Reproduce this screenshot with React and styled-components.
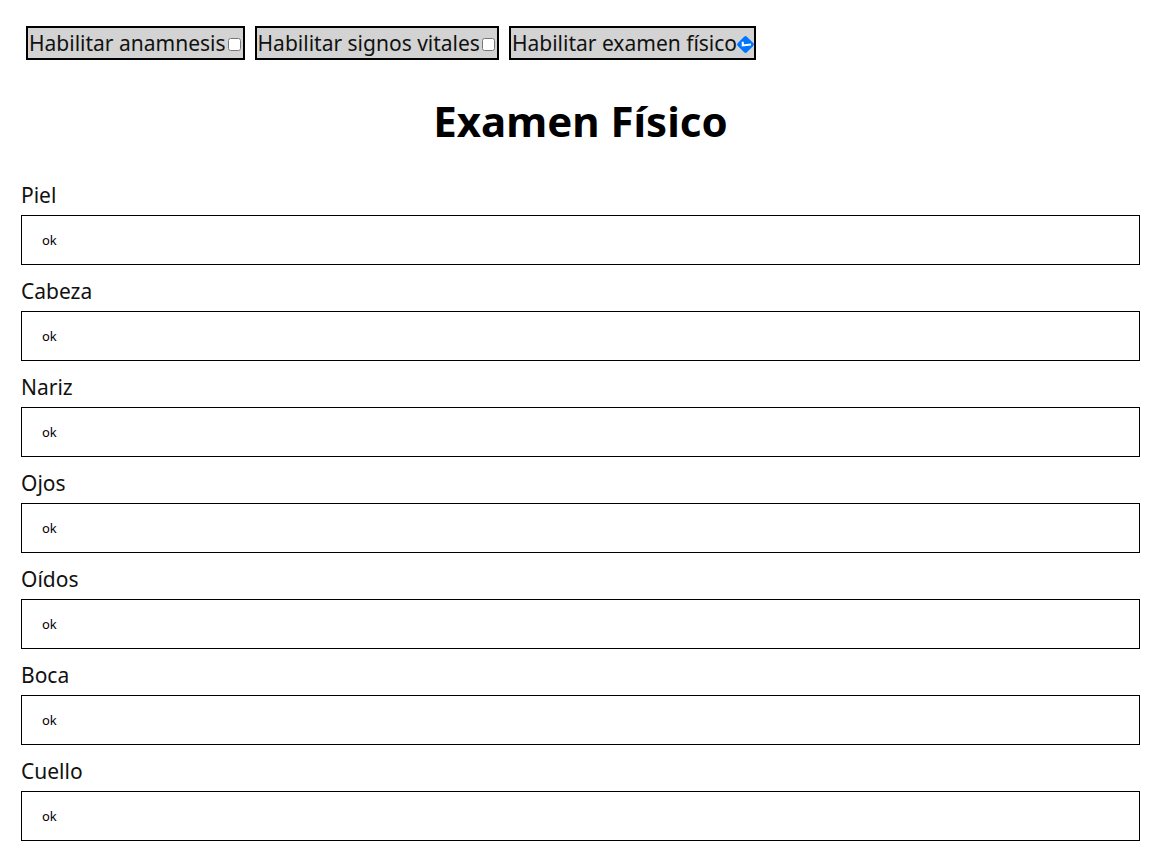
import styled, { createGlobalStyle } from "styled-components";

const GlobalStyle = createGlobalStyle`
  body {
    margin: 0;
    font-family: "Noto Sans", "Open Sans", sans-serif;
    background: #fff;
  }
`;

const Page = styled.div`
  padding: 26px 23px 20px 21px;
`;

const Toolbar = styled.div`
  display: flex;
  gap: 10px;
  padding-left: 5px;
`;

const Toggle = styled.label`
  display: flex;
  align-items: center;
  height: 34px;
  box-sizing: border-box;
  padding: 0 1px;
  border: 2px solid #000;
  background: #d3d3d3;
  font-size: 21px;
  color: #111;
  white-space: nowrap;
`;

const Check = styled.input`
  width: 13px;
  height: 13px;
  margin: 2px 1px 0 2px;
  transform: ${(p) => (p.checked ? "rotate(45deg)" : "none")};
`;

const Title = styled.h1`
  margin: 36px 0 33px;
  text-align: center;
  font-size: 42px;
  font-weight: 700;
  line-height: 1.2;
`;

const Field = styled.div`
  display: flex;
  flex-direction: column;
  margin-bottom: 10px;
`;

const Label = styled.label`
  font-size: 21px;
  line-height: 32px;
  margin-bottom: 4px;
  color: #111;
`;

const Input = styled.input`
  box-sizing: border-box;
  height: 50px;
  border: 1px solid #000;
  padding: 0 20px;
  font-family: "Noto Sans", sans-serif;
  font-size: 13px;
  color: #000;
  outline: none;
`;

const toggles = [
  { label: "Habilitar anamnesis", checked: false },
  { label: "Habilitar signos vitales", checked: false },
  { label: "Habilitar examen físico", checked: true },
];

const fields = ["Piel", "Cabeza", "Nariz", "Ojos", "Oídos", "Boca", "Cuello"];

export default function App() {
  return (
    <>
      <GlobalStyle />
      <Page>
        <Toolbar>
          {toggles.map((t) => (
            <Toggle key={t.label}>
              {t.label}
              <Check type="checkbox" checked={t.checked} readOnly />
            </Toggle>
          ))}
        </Toolbar>
        <Title>Examen Físico</Title>
        {fields.map((f) => (
          <Field key={f}>
            <Label>{f}</Label>
            <Input defaultValue="ok" />
          </Field>
        ))}
      </Page>
    </>
  );
}
